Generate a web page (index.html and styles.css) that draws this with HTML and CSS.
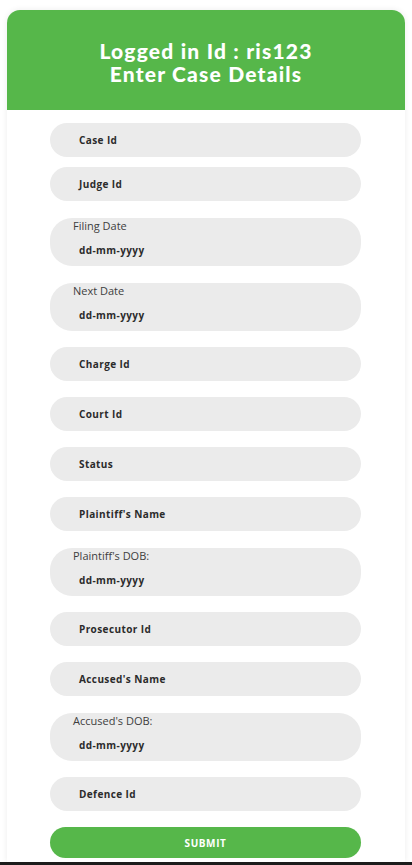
FILE: index.html
```html
<!DOCTYPE html>
<html>
<head>
<meta charset="utf-8">
<link rel="stylesheet" href="styles.css">
</head>
<body>
<div class="page">
  <div class="card">
    <div class="header">
      <h1>Logged in Id : ris123<br>Enter Case Details</h1>
    </div>
    <form class="form">
      <div class="field first"><span class="ph">Case Id</span></div>
      <div class="field"><span class="ph">Judge Id</span></div>
      <div class="field date"><span class="lbl">Filing Date</span><span class="ph">dd-mm-yyyy</span></div>
      <div class="field date"><span class="lbl">Next Date</span><span class="ph">dd-mm-yyyy</span></div>
      <div class="field"><span class="ph">Charge Id</span></div>
      <div class="field"><span class="ph">Court Id</span></div>
      <div class="field"><span class="ph">Status</span></div>
      <div class="field"><span class="ph">Plaintiff's Name</span></div>
      <div class="field date"><span class="lbl">Plaintiff's DOB:</span><span class="ph">dd-mm-yyyy</span></div>
      <div class="field"><span class="ph">Prosecutor Id</span></div>
      <div class="field"><span class="ph">Accused's Name</span></div>
      <div class="field date"><span class="lbl">Accused's DOB:</span><span class="ph">dd-mm-yyyy</span></div>
      <div class="field"><span class="ph">Defence Id</span></div>
      <button type="button" class="submit">SUBMIT</button>
    </form>
  </div>
  <div class="edge"></div>
</div>
</body>
</html>
```
FILE: styles.css
```css
* { box-sizing: border-box; }
html, body { margin: 0; padding: 0; background: #ffffff; }
body { font-family: "Open Sans", "Noto Sans", sans-serif; }
.page {
  height: 865px;
  overflow: hidden;
  display: flex;
  flex-direction: column;
  padding-top: 10px;
}
.card {
  margin-left: 7px;
  width: 398px;
  height: 852px;
  background: #ffffff;
  border-radius: 13px 13px 0 0;
  box-shadow: 0 0 6px rgba(0,0,0,0.08);
  overflow: hidden;
}
.header {
  height: 100px;
  background: #56b74a;
  display: flex;
  align-items: center;
  justify-content: center;
  padding-top: 3px;
}
.header h1 {
  margin: 0;
  color: #ffffff;
  font-family: "Lato", sans-serif;
  font-weight: 900;
  font-size: 21px;
  line-height: 23px;
  text-align: center;
  letter-spacing: 1.2px;
}
.form {
  padding: 13px 44px 0 43px;
  display: flex;
  flex-direction: column;
  gap: 16px;
}
.field {
  height: 34px;
  border-radius: 17px;
  background: #ebebeb;
  display: flex;
  flex-direction: column;
  justify-content: center;
  padding-left: 29px;
}
.field.first { margin-bottom: -6px; }
.field.date {
  height: 48px;
  border-radius: 22px;
  margin: 1px 0 0;
  justify-content: flex-start;
  padding-left: 23px;
  padding-top: 1px;
}
.ph {
  font-size: 10px;
  font-weight: 700;
  color: #2b2b2b;
  letter-spacing: 0.4px;
}
.date .ph { margin-left: 6px; margin-top: 10px; }
.lbl {
  font-size: 11px;
  font-weight: 400;
  color: #3e3e3e;
  line-height: 14px;
}
.submit {
  height: 31px;
  border: none;
  border-radius: 16px;
  background: #56b74a;
  color: #ffffff;
  font-family: "Open Sans", sans-serif;
  font-weight: 700;
  font-size: 10px;
  letter-spacing: 0.6px;
  padding: 0;
}
.edge {
  height: 3px;
  background: #1c1c1c;
}
```
